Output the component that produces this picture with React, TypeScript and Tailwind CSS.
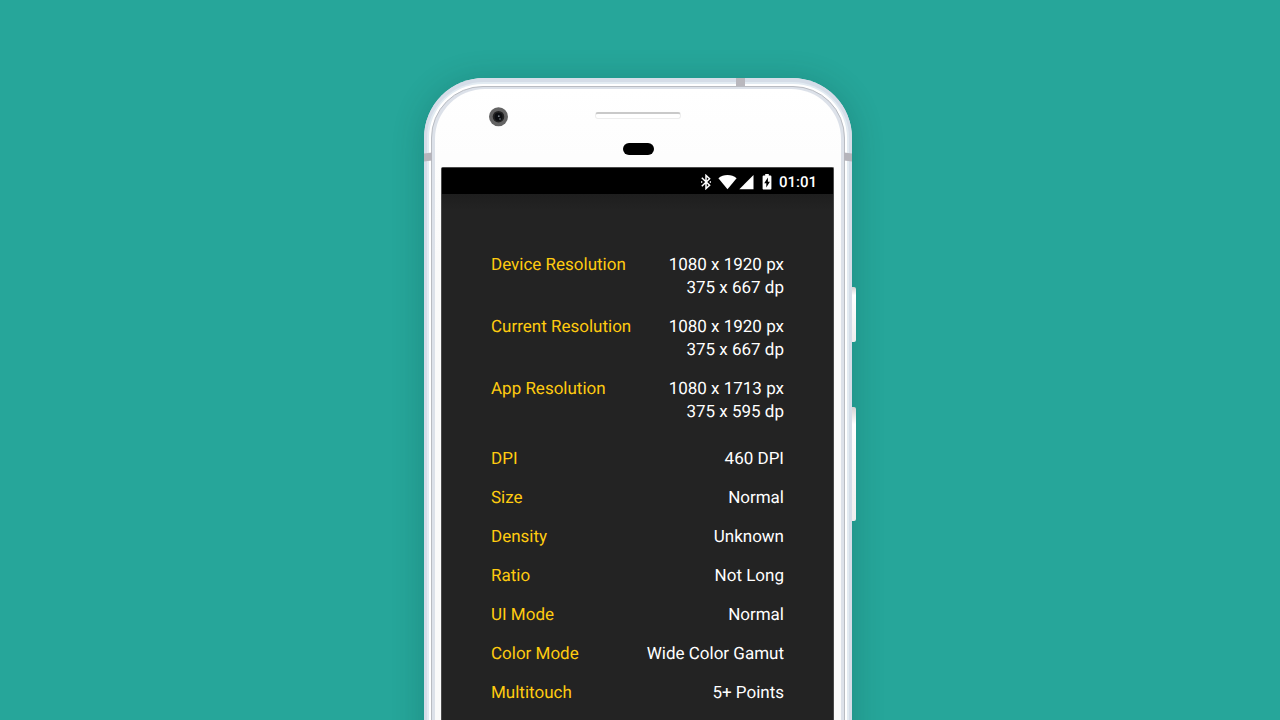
type Row = { label: string; values: string[] };

const resolutions: Row[] = [
  { label: "Device Resolution", values: ["1080 x 1920 px", "375 x 667 dp"] },
  { label: "Current Resolution", values: ["1080 x 1920 px", "375 x 667 dp"] },
  { label: "App Resolution", values: ["1080 x 1713 px", "375 x 595 dp"] },
];

const properties: Row[] = [
  { label: "DPI", values: ["460 DPI"] },
  { label: "Size", values: ["Normal"] },
  { label: "Density", values: ["Unknown"] },
  { label: "Ratio", values: ["Not Long"] },
  { label: "UI Mode", values: ["Normal"] },
  { label: "Color Mode", values: ["Wide Color Gamut"] },
  { label: "Multitouch", values: ["5+ Points"] },
];

function InfoList({ rows }: { rows: Row[] }) {
  return (
    <dl className="flex flex-col gap-4">
      {rows.map((row) => (
        <div key={row.label} className="flex justify-between">
          <dt className="text-[#ffcb10]">{row.label}</dt>
          <dd className="text-right text-white">
            {row.values.map((value) => (
              <div key={value}>{value}</div>
            ))}
          </dd>
        </div>
      ))}
    </dl>
  );
}

function StatusBar() {
  return (
    <header className="flex h-[26px] items-center justify-end bg-black pt-[2px] pr-4 text-white">
      <svg className="mr-[6px] h-4 w-3" viewBox="0 0 12 16" fill="none" stroke="currentColor" strokeWidth="1.500" aria-label="Bluetooth">
        <path d="M1.800 3.800 9.600 11.300 6 14.600V1.400l3.600 3.300L1.800 12.200" />
        <path d="M1 8h1.300M9.700 8h1.300" />
      </svg>
      <svg className="mr-0.5 h-4 w-[19px]" viewBox="0 0 19 16" fill="currentColor" aria-label="Wi-Fi">
        <path d="M.4 4.200C3 2.100 6 1 9.500 1s6.500 1.100 9.100 3.200L9.500 15.300z" />
      </svg>
      <svg className="mr-2 h-4 w-[15px]" viewBox="0 0 15 16" fill="currentColor" aria-label="Signal">
        <path d="M14.500 1v14.300H.3z" />
      </svg>
      <svg className="mr-[7px] h-4 w-[10px]" viewBox="0 0 10 16" fill="currentColor" aria-label="Battery charging">
        <path
          fillRule="evenodd"
          d="M3.200 0h3.600v1.500h1.700c.5 0 .9.400.9.900v12c0 .6-.4 1-.9 1h-7c-.5 0-.9-.4-.9-1v-12c0-.5.400-.9.900-.9h1.700zM5.900 3.600 2.200 9.200h2.100v4.300l3.600-5.800H5.900z"
        />
      </svg>
      <span className="text-[15px] leading-6 font-medium">01:01</span>
    </header>
  );
}

function Earpiece() {
  return (
    <div className="relative flex h-[78px] flex-col items-center">
      <svg className="absolute top-[18px] left-[48px] h-5 w-5" viewBox="0 0 20 20" aria-hidden="true">
        <circle cx="9.500" cy="9.700" r="9.500" fill="#646464" />
        <circle cx="9.500" cy="9.700" r="5.800" fill="#222" />
        <circle cx="9.500" cy="9.700" r="4" fill="#0b0d10" />
        <circle cx="9.800" cy="9.200" r=".9" fill="#7d858c" />
        <circle cx="11" cy="12" r=".8" fill="#7d858c" />
      </svg>
      <div className="mt-[23px] h-[7px] w-[86px] rounded-[3px] border border-t-2 border-[#ededed] border-t-[#c9c9c9] bg-white" />
      <div className="mt-[24px] ml-[2px] h-3 w-[31px] rounded-full bg-black" />
    </div>
  );
}

export default function App() {
  return (
    <main className="flex h-screen justify-center overflow-hidden bg-[#26a69a] pt-[78px] font-['Roboto',sans-serif] [text-rendering:geometricPrecision]">
      <section className="relative h-[860px] w-[428px] shrink-0 rounded-[60px] bg-[#d5dde8] shadow-[0_4px_32px_rgba(0,50,45,0.24)]">
        <div className="h-full rounded-[60px] border-x-[3px] border-t-[4px] border-[#d5dde8] bg-[#e2ebf2] px-[2px] pt-[2px]">
          <div className="h-full rounded-[54px] border-2 border-b-0 border-white bg-white">
            <div className="h-full rounded-[52px] border border-[#b9bcc2] bg-[#dce1e9] px-[3px] pt-[2px]">
              <div className="h-full rounded-[50px] bg-linear-to-b from-white to-[#fafafa] to-20% pr-[7px] pl-[6px]">
                <Earpiece />
                <div className="flex h-[740px] flex-col rounded-t-[2px] border-x border-t border-[#4a4a4a] bg-[#232323]">
                  <StatusBar />
                  <div className="h-4 bg-linear-to-b from-[#1e1e1e] to-[#232323]" />
                  <div className="flex flex-col gap-6 pt-11 pr-[49px] pl-[49px] text-[17px] leading-[23px]">
                    <InfoList rows={resolutions} />
                    <InfoList rows={properties} />
                  </div>
                </div>
              </div>
            </div>
          </div>
        </div>
        <i className="absolute top-0 left-[312px] h-2 w-[9px] bg-[#b9b8be]" />
        <i className="absolute top-[75px] left-0 h-2 w-2 -skew-y-6 bg-[#b5b4bb]" />
        <i className="absolute top-[75px] right-0 h-2 w-2 skew-y-6 bg-[#b5b4bb]" />
      </section>
      <div className="relative flex w-1 shrink-0 flex-col gap-[65px] pt-[209px]">
        <div className="h-[55px] rounded-r-[2px] bg-linear-to-b from-[#d3d3d3] via-white via-15% to-[#eeeeee]" />
        <div className="h-[114px] rounded-r-[2px] bg-linear-to-b from-[#d3d3d3] via-white via-15% to-[#eeeeee]" />
      </div>
    </main>
  );
}
